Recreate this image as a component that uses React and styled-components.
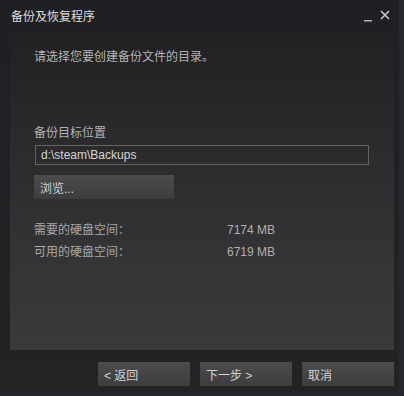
import React from 'react';
import styled, { createGlobalStyle } from 'styled-components';

const GlobalStyle = createGlobalStyle`
  html, body {
    margin: 0;
    padding: 0;
    background: #1d1f23;
  }
`;

const FONT = `"Liberation Sans", "Noto Sans CJK SC", sans-serif`;

const Window = styled.div`
  width: 404px;
  height: 396px;
  box-sizing: border-box;
  display: flex;
  flex-direction: column;
  background: linear-gradient(#1e2024, #222225 60%, #232326);
  border-right: 5px solid #242831;
  border-bottom: 4px solid #22262d;
  font-family: ${FONT};
  font-size: 12px;
`;

const TitleBar = styled.div`
  height: 30px;
  display: flex;
  align-items: center;
  padding: 0 6px 2px 11px;
  flex-shrink: 0;
`;

const Title = styled.div`
  flex: 1;
  color: #dedede;
`;

const WinButton = styled.div`
  width: 16px;
  height: 16px;
  display: flex;
  align-items: center;
  justify-content: center;
  margin-left: ${p => p.gap || 0}px;
`;

const Panel = styled.div`
  margin: 0 5px 0 10px;
  height: 318px;
  box-sizing: border-box;
  padding: 18px 24px 0 24px;
  background: linear-gradient(#212123, #2b2b2d 35%, #353537 75%, #3a3a3c);
  display: flex;
  flex-direction: column;
`;

const Text = styled.div`
  color: ${p => p.color || '#b4b4b4'};
  line-height: 14px;
  margin-top: ${p => p.top || 0}px;
`;

const PathInput = styled.div`
  margin-top: 5px;
  width: 334px;
  height: 20px;
  box-sizing: border-box;
  margin-left: 1px;
  border: 1px solid #626264;
  box-shadow: inset 0 0 0 1px #2a2a2c, inset 0 -2px 0 #3a3a3c;
  background: #2b2b2d;
  color: #d6d6d6;
  display: flex;
  align-items: center;
  padding-left: 5px;
`;

const Button = styled.div`
  width: ${p => p.width || 92}px;
  height: 24px;
  box-sizing: border-box;
  background: linear-gradient(#4c4c4e, #3d3d3f);
  color: #d2d2d2;
  display: flex;
  align-items: center;
  padding-left: ${p => p.pad || 8}px;
  margin-top: ${p => p.top || 0}px;
  flex-shrink: 0;
`;

const InfoRow = styled.div`
  display: flex;
  line-height: 14px;
  margin-top: ${p => p.top}px;
  color: #a8a8a8;
`;

const InfoLabel = styled.div`
  width: 193px;
`;

const InfoValue = styled.div`
  color: #b0b0b0;
`;

const Footer = styled.div`
  display: flex;
  justify-content: flex-end;
  gap: 10px;
  padding: 12px 5px 0 0;
`;

export default function App() {
  return (
    <>
      <GlobalStyle />
      <Window>
        <TitleBar>
          <Title>备份及恢复程序</Title>
          <WinButton>
            <svg width="10" height="16" viewBox="0 0 10 16">
              <rect x="1" y="13" width="8" height="1.5" fill="#b5b5b5" />
            </svg>
          </WinButton>
          <WinButton gap={1}>
            <svg width="12" height="12" viewBox="0 0 12 12">
              <path d="M2 2 L10 10 M10 2 L2 10" stroke="#c8c8c8" strokeWidth="1.6" />
            </svg>
          </WinButton>
        </TitleBar>
        <Panel>
          <Text>请选择您要创建备份文件的目录。</Text>
          <Text top={62}>备份目标位置</Text>
          <PathInput>d:\steam\Backups</PathInput>
          <Button width={140} pad={6} top={10}>浏览...</Button>
          <InfoRow top={24}>
            <InfoLabel>需要的硬盘空间：</InfoLabel>
            <InfoValue>7174 MB</InfoValue>
          </InfoRow>
          <InfoRow top={8}>
            <InfoLabel>可用的硬盘空间：</InfoLabel>
            <InfoValue>6719 MB</InfoValue>
          </InfoRow>
        </Panel>
        <Footer>
          <Button pad={6}>&lt; 返回</Button>
          <Button pad={6}>下一步 &gt;</Button>
          <Button pad={6}>取消</Button>
        </Footer>
      </Window>
    </>
  );
}
